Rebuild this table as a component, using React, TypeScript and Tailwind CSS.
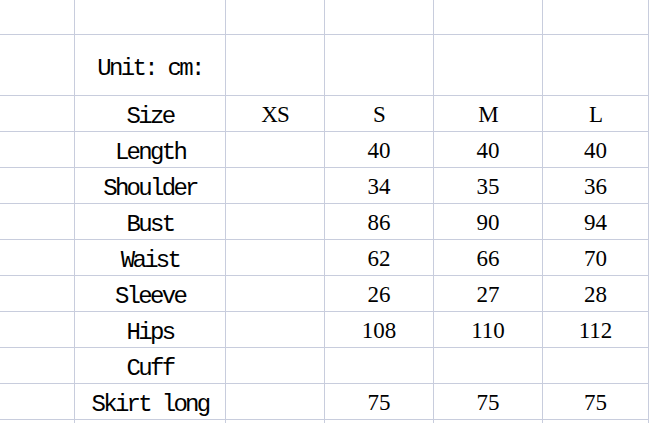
import React from 'react';

const mono = "font-['Liberation_Mono',monospace] text-[24px] tracking-[-2.7px] pt-[7px]";
const serif = "font-['Liberation_Serif',serif] text-[23px] pt-[4px]";

type Row = { h: string; label?: string; cells?: string[] };

const rows: Row[] = [
  { h: 'h-[35px]' },
  { h: 'h-[61px]', label: 'Unit: cm:' },
  { h: 'h-[36px]', label: 'Size', cells: ['XS', 'S', 'M', 'L'] },
  { h: 'h-[36px]', label: 'Length', cells: ['', '40', '40', '40'] },
  { h: 'h-[36px]', label: 'Shoulder', cells: ['', '34', '35', '36'] },
  { h: 'h-[36px]', label: 'Bust', cells: ['', '86', '90', '94'] },
  { h: 'h-[36px]', label: 'Waist', cells: ['', '62', '66', '70'] },
  { h: 'h-[36px]', label: 'Sleeve', cells: ['', '26', '27', '28'] },
  { h: 'h-[36px]', label: 'Hips', cells: ['', '108', '110', '112'] },
  { h: 'h-[36px]', label: 'Cuff', cells: ['', '', '', ''] },
  { h: 'h-[36px]', label: 'Skirt long', cells: ['', '75', '75', '75'] },
  { h: 'h-[36px]' },
];

const widths = ['w-[99px]', 'w-[109px]', 'w-[109px]', 'flex-1'];

const Cell: React.FC<{ className?: string; children?: React.ReactNode }> = ({ className, children }) => (
  <div className={`flex items-center justify-center border-r border-b border-[#c8cddd] text-black ${className ?? ''}`}>
    {children}
  </div>
);

export default function App() {
  return (
    <div className="w-[649px] h-[423px] overflow-hidden bg-white">
      {rows.map((r, i) => (
        <div key={i} className={`flex ${r.h}`}>
          <Cell className="w-[75px]" />
          <Cell className={`w-[151px] ${mono}`}>{r.label}</Cell>
          {widths.map((w, j) => {
            const v = r.cells?.[j] ?? '';
            const isLetter = /[A-Z]/.test(v);
            return (
              <Cell key={j} className={`${w} ${serif} ${isLetter ? 'tracking-[-1px]' : ''}`}>
                {v}
              </Cell>
            );
          })}
        </div>
      ))}
    </div>
  );
}
